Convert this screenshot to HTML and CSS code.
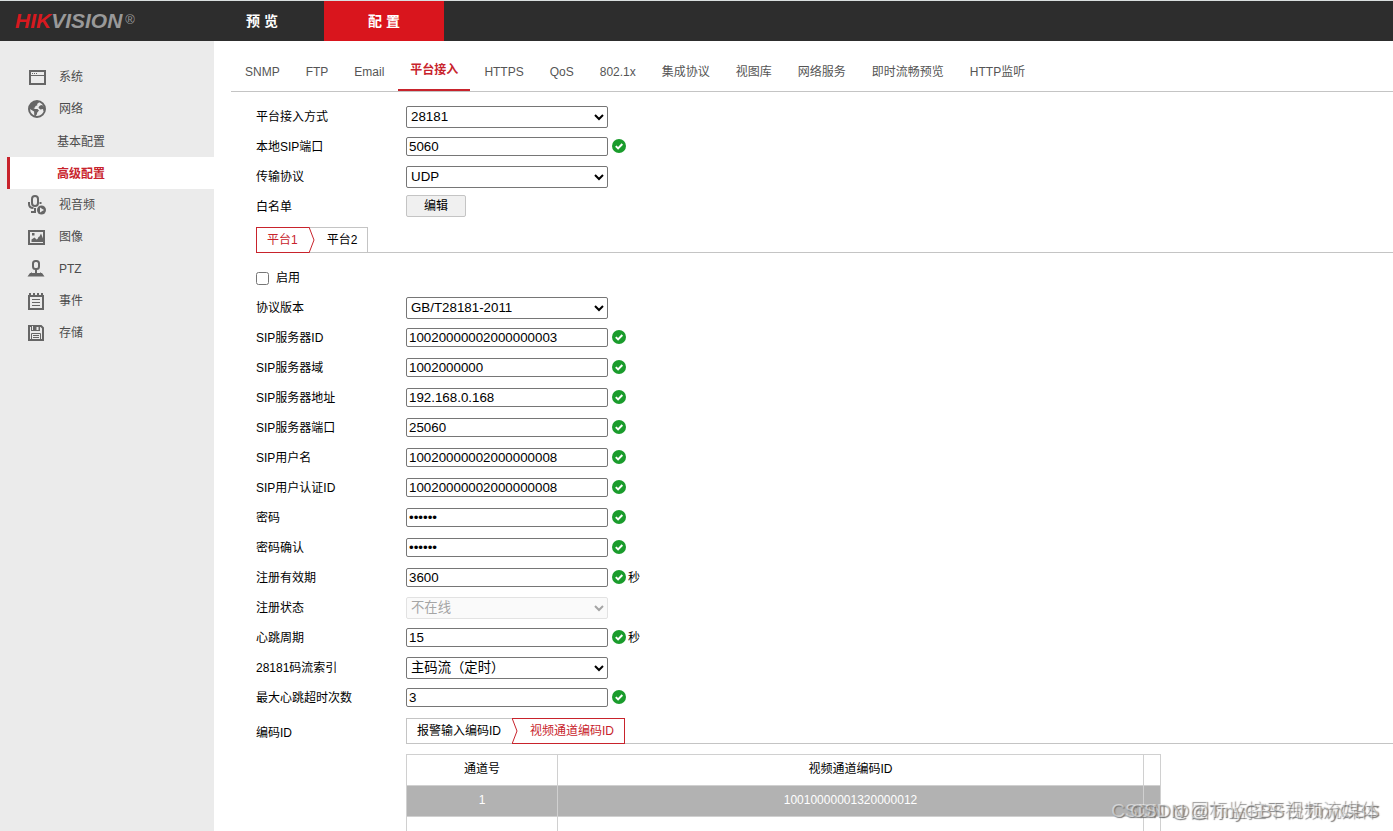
FILE: index.html
```html
<!DOCTYPE html>
<html lang="zh-CN">
<head>
<meta charset="utf-8">
<title>配置</title>
<link rel="stylesheet" href="styles.css">
</head>
<body>
<svg class="defs" aria-hidden="true">
  <symbol id="ok" viewBox="0 0 14 14"><circle cx="7" cy="7" r="7" fill="#1a9c2c"/><path d="M3.800 7.100l2.300 2.300 4.200-4.400" fill="none" stroke="#fff" stroke-width="2"/></symbol>
</svg>
<header class="topbar">
  <div class="logo"><span class="logo-red">HIK</span>VISION<span class="logo-reg">®</span></div>
  <nav class="topnav">
    <a href="#" class="topnav-item">预 览</a>
    <a href="#" class="topnav-item active">配 置</a>
  </nav>
</header>
<div class="layout">
  <nav class="sidebar">
    <a href="#" class="side-item"><svg class="side-icon" viewBox="0 0 20 20"><path fill="none" stroke="#666" stroke-width="2" d="M3 4h15v13H3z"/><path fill="none" stroke="#666" d="M3 8.500h15"/><path stroke="#666" d="M5 6.500h1m1 0h1m1 0h1"/></svg>系统</a>
    <a href="#" class="side-item"><svg class="side-icon" viewBox="0 0 20 20"><circle cx="10" cy="10" r="8" fill="none" stroke="#666" stroke-width="2"/><path fill="#666" d="M2 7L7 2l4 0 1 1.500-2 1.500.5 1.200-2 .8-.5 1.500-1.500.5 1.500 1h2.500l1.500 1.500-1.700 2-.5 2-1.500 2-1-.5-.2-4.500L2 9.500zM12 7.500l2-1.500 2 .5 2 3v3l-1.500-.5-.5-2-2.500.5-2-1.500z"/></svg>网络</a>
    <a href="#" class="side-item side-sub">基本配置</a>
    <a href="#" class="side-item side-sub active">高级配置</a>
    <a href="#" class="side-item"><svg class="side-icon" viewBox="0 0 20 20"><rect x="5" y="1" width="6" height="10" rx="3" fill="none" stroke="#666" stroke-width="2"/><path fill="none" stroke="#666" stroke-width="2" d="M2 7v2c0 2.500 2 4 4.500 4M8 13v4M4 17h5M13.500 7v2"/><circle cx="14.500" cy="15" r="4.500" fill="#666"/><path fill="#ebebeb" d="M13 12.500l4 2.500-4 2.500z"/></svg>视音频</a>
    <a href="#" class="side-item"><svg class="side-icon" viewBox="0 0 20 20"><path fill="none" stroke="#666" stroke-width="2" d="M2 4h15v13H2z"/><path fill="#666" d="M4.500 15v-2.500l3-2 2 2 1-.5 1-2 1-.500 1.500-3 2 5v3.500zM5 6h2.500v2.500H5z"/></svg>图像</a>
    <a href="#" class="side-item"><svg class="side-icon" viewBox="0 0 20 20"><rect x="6" y="2" width="6" height="8" rx="2.500" fill="none" stroke="#666" stroke-width="2"/><path fill="#666" d="M8 10h2v3h4v1h1l2.500 3.500h-17L3 14h1v-1h4z"/><path stroke="#ebebeb" d="M4.500 13.500h3.500m2 0h3.500"/></svg>PTZ</a>
    <a href="#" class="side-item"><svg class="side-icon" viewBox="0 0 20 20"><path fill="none" stroke="#666" stroke-width="2" d="M2 5h14v13H2z"/><path stroke="#666" stroke-width="2" d="M3 2v3m4-3v3m4-3v3m4-3v3"/><path stroke="#666" d="M5 8.500h8M5 11.500h8M5 14.500h8"/></svg>事件</a>
    <a href="#" class="side-item"><svg class="side-icon" viewBox="0 0 20 20"><path fill="none" stroke="#666" stroke-width="2" d="M2 3h12l2 2v12H2z"/><path fill="#666" d="M4 3h9v5H4z"/><path fill="#ebebeb" d="M9.500 4h2v3h-2zM5 3h1v4H5z"/><path fill="none" stroke="#666" d="M4.500 17v-6.500h9V17M6 12.500h6M6 14.500h6"/></svg>存储</a>
  </nav>
  <main class="content">
    <nav class="tabs">
      <a href="#" class="tab">SNMP</a><a href="#" class="tab">FTP</a><a href="#" class="tab">Email</a><a href="#" class="tab active">平台接入</a><a href="#" class="tab">HTTPS</a><a href="#" class="tab">QoS</a><a href="#" class="tab">802.1x</a><a href="#" class="tab">集成协议</a><a href="#" class="tab">视图库</a><a href="#" class="tab">网络服务</a><a href="#" class="tab">即时流畅预览</a><a href="#" class="tab">HTTP监听</a>
    </nav>
    <form class="form">
      <div class="row"><label class="label" for="mode">平台接入方式</label><select class="field" id="mode"><option>28181</option></select></div>
      <div class="row"><label class="label" for="port">本地SIP端口</label><input class="field" id="port" value="5060"><svg class="ok"><use href="#ok"/></svg></div>
      <div class="row"><label class="label" for="proto">传输协议</label><select class="field" id="proto"><option>UDP</option></select></div>
      <div class="row"><span class="label">白名单</span><button type="button" class="edit">编辑</button></div>
      <div class="steps platform-steps">
        <button type="button" class="step first active">平台1</button>
        <svg class="chevron" viewBox="0 0 6 26"><path d="M0 .5h6M0 25.500h6" class="line-grey"/><path d="M0 0l5 13-5 13" class="line-red"/></svg>
        <button type="button" class="step last">平台2</button>
      </div>
      <div class="row"><input type="checkbox" class="check" id="enable"><label for="enable">启用</label></div>
      <div class="row"><label class="label" for="ver">协议版本</label><select class="field" id="ver"><option>GB/T28181-2011</option></select></div>
      <div class="row"><label class="label" for="sid">SIP服务器ID</label><input class="field" id="sid" value="10020000002000000003"><svg class="ok"><use href="#ok"/></svg></div>
      <div class="row"><label class="label" for="dom">SIP服务器域</label><input class="field" id="dom" value="1002000000"><svg class="ok"><use href="#ok"/></svg></div>
      <div class="row"><label class="label" for="addr">SIP服务器地址</label><input class="field" id="addr" value="192.168.0.168"><svg class="ok"><use href="#ok"/></svg></div>
      <div class="row"><label class="label" for="sport">SIP服务器端口</label><input class="field" id="sport" value="25060"><svg class="ok"><use href="#ok"/></svg></div>
      <div class="row"><label class="label" for="user">SIP用户名</label><input class="field" id="user" value="10020000002000000008"><svg class="ok"><use href="#ok"/></svg></div>
      <div class="row"><label class="label" for="auth">SIP用户认证ID</label><input class="field" id="auth" value="10020000002000000008"><svg class="ok"><use href="#ok"/></svg></div>
      <div class="row"><label class="label" for="pw">密码</label><input type="password" class="field" id="pw" value="123456"><svg class="ok"><use href="#ok"/></svg></div>
      <div class="row"><label class="label" for="pw2">密码确认</label><input type="password" class="field" id="pw2" value="123456"><svg class="ok"><use href="#ok"/></svg></div>
      <div class="row"><label class="label" for="exp">注册有效期</label><input class="field" id="exp" value="3600"><svg class="ok"><use href="#ok"/></svg><span class="unit">秒</span></div>
      <div class="row"><label class="label" for="state">注册状态</label><select class="field" id="state" disabled><option>不在线</option></select></div>
      <div class="row"><label class="label" for="beat">心跳周期</label><input class="field" id="beat" value="15"><svg class="ok"><use href="#ok"/></svg><span class="unit">秒</span></div>
      <div class="row"><label class="label" for="stream">28181码流索引</label><select class="field" id="stream"><option>主码流（定时）</option></select></div>
      <div class="row"><label class="label" for="max">最大心跳超时次数</label><input class="field" id="max" value="3"><svg class="ok"><use href="#ok"/></svg></div>
      <div class="code-row">
        <span class="label code-label">编码ID</span>
        <div class="code-body">
          <div class="steps">
            <button type="button" class="step first">报警输入编码ID</button>
            <svg class="chevron" viewBox="0 0 6 26"><path d="M0 .5h6M0 25.500h6" class="line-red"/><path d="M0 0l5 13-5 13" class="line-red"/></svg>
            <button type="button" class="step last active">视频通道编码ID</button>
          </div>
          <table class="grid">
            <colgroup><col class="col-no"><col><col class="col-end"></colgroup>
            <thead><tr><th>通道号</th><th>视频通道编码ID</th><th></th></tr></thead>
            <tbody>
              <tr class="selected"><td>1</td><td>10010000001320000012</td><td></td></tr>
              <tr><td></td><td></td><td></td></tr>
            </tbody>
          </table>
        </div>
      </div>
    </form>
  </main>
</div>
<div class="watermark">CSDN @国标监控平台TinyGBS</div>
<div class="watermark">CSDN @TinyGBS视频流媒体</div>
</body>
</html>
```
FILE: styles.css
```css
* { box-sizing: border-box; }
body {
  margin: 0;
  height: 100vh;
  overflow: hidden;
  display: flex;
  flex-direction: column;
  background: #fff;
  color: #000;
  font: 12px/20px "Liberation Sans", "Noto Sans CJK SC", sans-serif;
}
a { color: inherit; text-decoration: none; }
.defs { position: absolute; width: 0; height: 0; }

.topbar {
  flex: none;
  display: flex;
  height: 41px;
  background: #2d2d2d;
  border-top: 1px solid #d9dfdf;
}
.logo {
  width: 204px;
  padding-left: 15px;
  font-size: 21px;
  font-weight: bold;
  font-style: italic;
  line-height: 40px;
  color: #999;
}
.logo-red { color: #d7191f; }
.logo-reg { font-size: 13px; font-weight: normal; font-style: normal; vertical-align: 4px; line-height: 12px; margin-left: 3px; }
.topnav { display: flex; }
.topnav-item {
  width: 120px;
  text-align: center;
  font-size: 14px;
  font-weight: bold;
  line-height: 40px;
  color: #fff;
}
.topnav-item:first-child { padding-right: 4px; }
.topnav-item.active { background: #d9151d; }

.layout { flex: 1; min-height: 0; display: flex; }
.sidebar { flex: none; width: 214px; padding: 20px 0 0 7px; background: #ebebeb; }
.side-item {
  display: flex;
  align-items: center;
  gap: 12px;
  height: 32px;
  padding-left: 20px;
  color: #4c4c4c;
}
.side-icon { width: 20px; height: 20px; }
.side-sub { padding-top: 2px; padding-left: 50px; }
.side-sub.active {
  padding-left: 47px;
  border-left: 3px solid #c8232c;
  background: #fff;
  color: #c8232c;
  font-weight: bold;
}

.content { flex: 1; min-width: 0; padding-left: 17px; }
.tabs {
  display: flex;
  gap: 2px;
  height: 51px;
  padding-left: 2px;
  border-bottom: 1px solid #c4c4c4;
}
.tab { padding: 21px 12px 0; height: 50px; color: #555; }
.tab.active {
  padding-top: 19px;
  color: #c8232c;
  font-weight: bold;
  border-bottom: 2px solid #c8232c;
}

.form { padding: 10px 0 0 25px; }
.row { display: flex; align-items: center; height: 30px; }
.label { flex: none; width: 150px; }
.field {
  width: 202px;
  height: 19px;
  margin: 0 0 1px;
  border: 1px solid #767676;
  border-radius: 2px;
  padding: 0 2px;
  background: #fff;
  color: #000;
  font-family: "Liberation Sans", "Noto Sans CJK SC", sans-serif;
}
select.field { height: 22px; margin: 0; padding: 0 0 1px; }
select.field:disabled { background: #f9f9f9; border-color: #d6d6d6; color: #808080; }
.ok { width: 14px; height: 14px; margin: 0 0 2px 4px; }
.unit { margin-left: 2px; }
.edit {
  width: 60px;
  height: 22px;
  margin-bottom: 2px;
  padding: 0;
  border: 1px solid #c4c4c4;
  border-radius: 2px;
  background: #f0f0f0;
  color: #000;
  font: inherit;
}
.check { width: 13px; height: 13px; margin: 0 7px 0 0; }

.steps { display: flex; height: 26px; border-bottom: 1px solid #c4c4c4; }
.platform-steps { margin: 5px 0 10px; }
.step {
  height: 26px;
  padding: 0 11px 0 10px;
  border: 1px solid #c4c4c4;
  background: #fff;
  color: #000;
  font: inherit;
  line-height: 24px;
}
.step.first { border-right: 0; }
.step.last { border-left: 0; padding-left: 12px; padding-right: 10px; }
.step.active { border-color: #c8232c; color: #c8232c; }
.chevron { width: 6px; height: 26px; }
.line-grey { fill: none; stroke: #c4c4c4; }
.line-red { fill: none; stroke: #c8232c; }

.code-row { display: flex; padding-top: 5px; }
.code-label { padding-top: 5px; }
.code-body { flex: 1; min-width: 0; }
.grid {
  width: 755px;
  max-width: 100%;
  margin-top: 10px;
  table-layout: fixed;
  border-collapse: collapse;
  border: 1px solid #d0d0d0;
}
.col-no { width: 151px; }
.col-end { width: 17px; }
.grid th, .grid td {
  height: 31px;
  padding: 0 0 2px;
  border: 1px solid #d0d0d0;
  font-weight: normal;
  text-align: center;
}
.grid .selected { background: #b2b2b2; color: #fff; }

.watermark {
  position: absolute;
  right: 14px;
  bottom: 7px;
  color: rgba(255, 255, 255, 0.5);
  font-size: 19px;
  font-weight: 300;
  line-height: 26px;
  white-space: nowrap;
  text-shadow: 1px 1px 1px #777;
}
```
